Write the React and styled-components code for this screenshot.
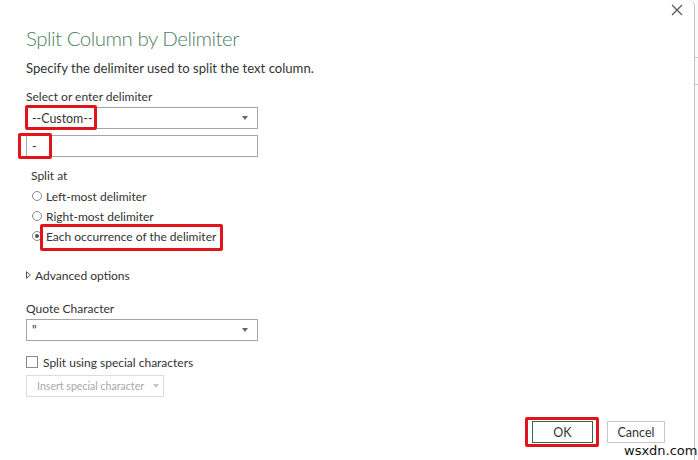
import React from "react";
import styled, { createGlobalStyle } from "styled-components";

const GlobalStyle = createGlobalStyle`
  html, body {
    margin: 0;
    padding: 0;
    background: #fff;
  }
  body {
    font-family: Lato, "Open Sans", sans-serif;
    color: #333;
  }
`;

const Screen = styled.div`
  display: flex;
  width: 698px;
  height: 460px;
  overflow: hidden;
  position: relative;
`;

const Dialog = styled.div`
  flex: 0 0 695px;
  box-sizing: border-box;
  border-right: 1px solid #c4c4c4;
  border-top-right-radius: 6px;
  display: flex;
  flex-direction: column;
  padding-left: 26px;
  background: #fff;
`;

// sliver of the window behind the dialog
const Behind = styled.div`
  flex: 1;
  background:
    linear-gradient(#c8c8c8, #c8c8c8) 0 57px / 100% 1px no-repeat,
    linear-gradient(#c8c8c8, #c8c8c8) 0 84px / 100% 1px no-repeat,
    #fafafa;
`;

const TopBar = styled.div`
  display: flex;
  justify-content: flex-end;
  height: 24px;
  padding-right: 11px;
`;

const Close = styled.button`
  border: 0;
  background: none;
  padding: 0;
  margin-top: 4px;
  width: 12px;
  height: 12px;
  display: flex;
  cursor: pointer;
`;

const Title = styled.h1`
  margin: 0;
  font-size: 20.5px;
  font-weight: 300;
  letter-spacing: -0.5px;
  line-height: 28px;
  color: #4d7f64;
`;

const Subtitle = styled.p`
  margin: 6px 0 0;
  font-size: 13.1px;
  line-height: 20px;
`;

const Label = styled.div`
  font-size: 12px;
  line-height: 16px;
  margin-top: ${(p) => p.$top || 0}px;
  padding-left: ${(p) => p.$indent || 0}px;
`;

const Field = styled.div`
  position: relative;
  box-sizing: border-box;
  width: 232px;
  height: 22px;
  margin-top: ${(p) => p.$top || 0}px;
  border: 1px solid #a6a6a6;
  display: flex;
  align-items: center;
  justify-content: space-between;
  padding: 0 9px 0 5px;
  font-size: 12.4px;
  background: #fff;
`;

const Caret = styled.span`
  width: 0;
  height: 0;
  border-left: 3.5px solid transparent;
  border-right: 3.5px solid transparent;
  border-top: 4px solid ${(p) => (p.$muted ? "#c4c4c4" : "#666")};
`;

// red annotation frames
const Mark = styled.span`
  position: absolute;
  box-sizing: border-box;
  border: 3px solid #e1141c;
  border-radius: 2px;
  left: ${(p) => p.$l}px;
  top: ${(p) => p.$t}px;
  width: ${(p) => p.$w}px;
  height: ${(p) => p.$h}px;
  pointer-events: none;
`;

const Options = styled.div`
  display: flex;
  flex-direction: column;
  padding-left: 6px;
  margin-top: 2px;
`;

const Option = styled.label`
  position: relative;
  display: flex;
  align-items: center;
  gap: 4px;
  height: 20px;
  font-size: 12px;
`;

const Radio = styled.span`
  box-sizing: border-box;
  width: 10px;
  height: 10px;
  border-radius: 50%;
  border: 1px solid #8a8a8a;
  background: #fff;
  display: flex;
  align-items: center;
  justify-content: center;
  &::after {
    content: "";
    width: 4px;
    height: 4px;
    border-radius: 50%;
    background: ${(p) => (p.$on ? "#555" : "transparent")};
  }
`;

const Expander = styled.div`
  display: flex;
  align-items: center;
  gap: 4px;
  margin-top: 19px;
  height: 20px;
  font-size: 12px;
`;

const Tri = styled.span`
  width: 0;
  height: 0;
  border-top: 4px solid transparent;
  border-bottom: 4px solid transparent;
  border-left: 5px solid #555;
  position: relative;
  &::after {
    content: "";
    position: absolute;
    left: -4px;
    top: -2.5px;
    border-top: 2.5px solid transparent;
    border-bottom: 2.5px solid transparent;
    border-left: 3px solid #fff;
  }
`;

const CheckRow = styled.label`
  display: flex;
  align-items: center;
  gap: 5px;
  margin-top: 12px;
  height: 18px;
  font-size: 12px;
`;

const Box = styled.span`
  box-sizing: border-box;
  width: 12px;
  height: 12px;
  border: 1px solid #8a8a8a;
  background: #fff;
`;

const Insert = styled.button`
  box-sizing: border-box;
  align-self: flex-start;
  margin-top: 4px;
  height: 22px;
  width: 138px;
  display: flex;
  align-items: center;
  gap: 9px;
  padding: 0 0 0 10px;
  white-space: nowrap;
  border: 1px solid #dcdcdc;
  background: #fff;
  color: #a8a8a8;
  font-family: inherit;
  font-size: 10.6px;
`;

const Footer = styled.div`
  margin-top: auto;
  display: flex;
  justify-content: flex-end;
  gap: 14px;
  padding: 0 29px 17px 0;
`;

const Button = styled.button`
  position: relative;
  box-sizing: border-box;
  height: 22px;
  width: ${(p) => p.$w}px;
  border: 1px solid ${(p) => (p.$primary ? "#2d6a4b" : "#c8c8c8")};
  background: #fff;
  color: #333;
  font-family: inherit;
  font-size: 12.5px;
  padding: 0;
`;

const Watermark = styled.span`
  position: absolute;
  left: 624px;
  top: 443px;
  font-family: "DejaVu Sans", Verdana, sans-serif;
  font-size: 13px;
  color: #111;
`;

export default function App() {
  return (
    <>
      <GlobalStyle />
      <Screen>
        <Dialog>
          <TopBar>
            <Close aria-label="Close">
              <svg width="12" height="12" viewBox="0 0 12 12">
                <path d="M1 1 L11 11 M11 1 L1 11" stroke="#555" strokeWidth="1.2" />
              </svg>
            </Close>
          </TopBar>
          <Title>Split Column by Delimiter</Title>
          <Subtitle>Specify the delimiter used to split the text column.</Subtitle>

          <Label $top={11}>Select or enter delimiter</Label>
          <Field $top={2}>
            <span>--Custom--</span>
            <Caret />
            <Mark $l={-2} $t={-3} $w={72} $h={25} />
          </Field>
          <Field $top={6}>
            <span>-</span>
            <Mark $l={-9} $t={-3} $w={34} $h={26} />
          </Field>

          <Label $top={11} $indent={5}>Split at</Label>
          <Options>
            <Option>
              <Radio />
              Left-most delimiter
            </Option>
            <Option>
              <Radio />
              Right-most delimiter
            </Option>
            <Option>
              <Radio $on />
              Each occurrence of the delimiter
              <Mark $l={8} $t={-2} $w={183} $h={27} />
            </Option>
          </Options>

          <Expander>
            <Tri />
            Advanced options
          </Expander>

          <Label $top={16}>Quote Character</Label>
          <Field $top={2}>
            <span>"</span>
            <Caret />
          </Field>

          <CheckRow>
            <Box />
            Split using special characters
          </CheckRow>
          <Insert>
            Insert special character
            <Caret $muted />
          </Insert>

          <Footer>
            <Button $primary $w={61}>
              OK
              <Mark $l={-8} $t={-5} $w={74} $h={30} />
            </Button>
            <Button $w={58}>Cancel</Button>
          </Footer>
        </Dialog>
        <Behind />
        <Watermark>wsxdn.com</Watermark>
      </Screen>
    </>
  );
}
